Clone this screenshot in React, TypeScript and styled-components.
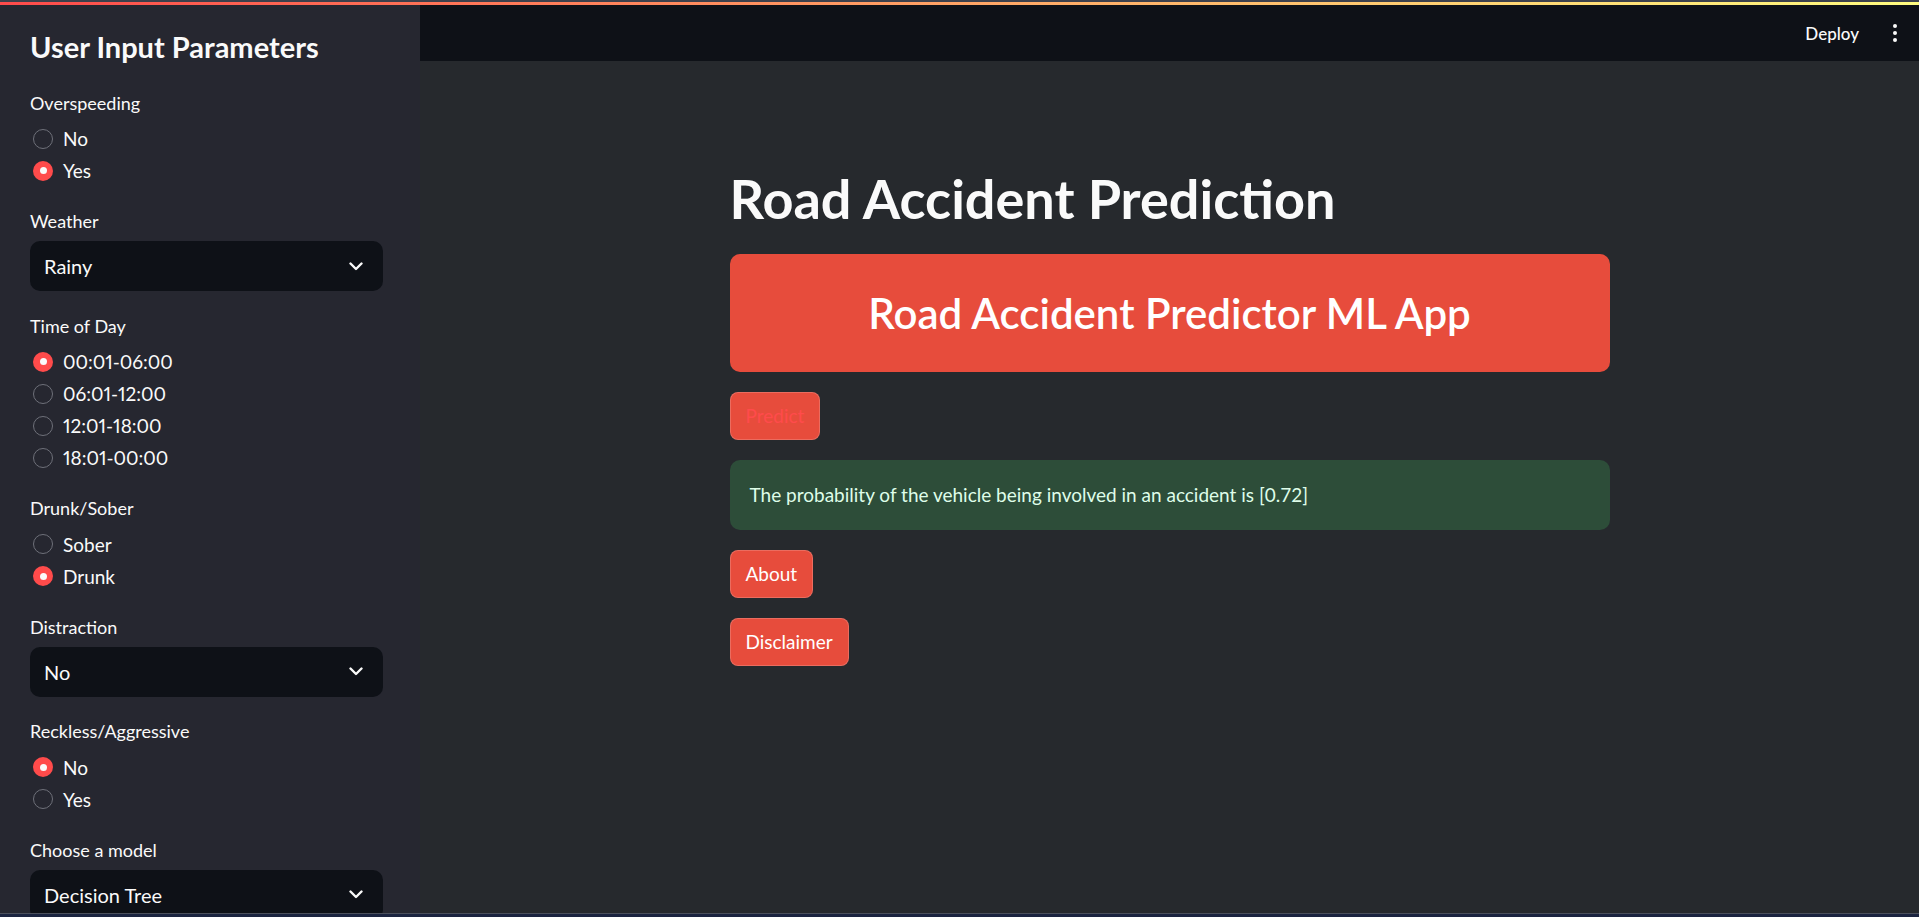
import React from "react";
import styled, { createGlobalStyle } from "styled-components";

const FONT = `Lato, "Noto Sans", "Liberation Sans", sans-serif`;

const GlobalStyle = createGlobalStyle`
  html, body {
    margin: 0;
    padding: 0;
    height: 100%;
    overflow: hidden;
    background: #26292d;
  }
  body {
    font-family: ${FONT};
    color: #fafafa;
    -webkit-font-smoothing: antialiased;
  }
  * { box-sizing: border-box; }
`;

const Page = styled.div`
  display: flex;
  flex-direction: column;
  height: 100vh;
  overflow: hidden;
`;

const ChromeStrip = styled.div`
  height: 2px;
  flex: none;
  background: #3d414c;
`;

const Decoration = styled.div`
  height: 3px;
  flex: none;
  background: linear-gradient(90deg, rgb(255, 75, 75), rgb(255, 253, 128));
`;

const Body = styled.div`
  flex: 1;
  display: flex;
  min-height: 0;
`;

const Sidebar = styled.aside`
  width: 420px;
  flex: none;
  background: #262730;
  padding: 22px 37px 0 30px;
  display: flex;
  flex-direction: column;
  overflow: hidden;
`;

const SidebarTitle = styled.h2`
  margin: 0 0 23.5px 0;
  font-size: 29px;
  line-height: 40px;
  font-weight: 700;
  color: #fafafa;
  white-space: nowrap;
`;

const Widgets = styled.div`
  display: flex;
  flex-direction: column;
  gap: 22.5px;
`;

const Widget = styled.div`
  display: flex;
  flex-direction: column;
  gap: 8px;
`;

const Label = styled.div`
  font-size: 18px;
  line-height: 24px;
  height: 24px;
  color: #fafafa;
`;

const RadioGroup = styled.div`
  display: flex;
  flex-direction: column;
`;

const RadioRow = styled.div`
  height: 32px;
  display: flex;
  align-items: center;
  gap: 10px;
  padding-left: 3px;
  font-size: 19px;
  font-variant-numeric: proportional-nums;
  color: #fafafa;
`;

const RadioDot = styled.span<{ $on?: boolean }>`
  width: 20px;
  height: 20px;
  border-radius: 50%;
  flex: none;
  display: flex;
  align-items: center;
  justify-content: center;
  background: ${(p) => (p.$on ? "#ff4b4b" : "transparent")};
  border: ${(p) => (p.$on ? "none" : "1.5px solid #6e7079")};
  &::after {
    content: "";
    display: ${(p) => (p.$on ? "block" : "none")};
    width: 7px;
    height: 7px;
    border-radius: 50%;
    background: #fafafa;
  }
`;

const SelectBox = styled.div`
  height: 50px;
  border-radius: 10px;
  background: #0e1117;
  display: flex;
  align-items: center;
  justify-content: space-between;
  padding: 0 20px 0 14px;
  font-size: 20px;
  color: #fafafa;
  flex: none;
`;

const Main = styled.div`
  flex: 1;
  display: flex;
  flex-direction: column;
  min-width: 0;
`;

const Header = styled.header`
  height: 56px;
  flex: none;
  background: #0e1117;
  display: flex;
  align-items: center;
  justify-content: flex-end;
  padding-right: 22px;
  gap: 34px;
`;

const DeployButton = styled.span`
  font-size: 17px;
  color: #fafafa;
  font-weight: 500;
`;

const MenuDots = styled.span`
  display: flex;
  flex-direction: column;
  gap: 3px;
  & > i {
    display: block;
    width: 4px;
    height: 4px;
    border-radius: 50%;
    background: #fafafa;
  }
`;

const Content = styled.div`
  width: 880px;
  margin: 0 auto;
  padding-top: 105px;
  display: flex;
  flex-direction: column;
  gap: 20px;
`;

const Title = styled.h1`
  margin: 0 0 2px 0;
  font-size: 54px;
  line-height: 66px;
  font-weight: 700;
  color: #fafafa;
  white-space: nowrap;
`;

const Banner = styled.div`
  height: 118px;
  border-radius: 10px;
  background: #e74c3c;
  display: flex;
  align-items: center;
  justify-content: center;
`;

const BannerText = styled.h2`
  margin: 0;
  font-size: 42px;
  font-weight: 600;
  color: #ffffff;
  white-space: nowrap;
`;

const Button = styled.button<{ $faded?: boolean }>`
  align-self: flex-start;
  height: 48px;
  padding: 0 15px;
  border-radius: 8px;
  border: 1px solid rgba(255, 255, 255, 0.18);
  background: #e74c3c;
  color: ${(p) => (p.$faded ? "#ff4b4b" : "#ffffff")};
  font-family: ${FONT};
  font-size: 19px;
  line-height: 32px;
  cursor: pointer;
`;

const SuccessBox = styled.div`
  height: 70px;
  border-radius: 10px;
  background: #2d4d39;
  color: #dffde9;
  font-size: 19px;
  line-height: 30px;
  padding: 20px;
`;

const BottomEdge = styled.div`
  position: fixed;
  left: 0;
  right: 0;
  bottom: 0;
  height: 4px;
  border-top: 1px solid #4b505c;
  background: #1b2440;
`;

const Chevron = () => (
  <svg width="14" height="9" viewBox="0 0 14 9" fill="none">
    <path d="M1.5 1.5 L7 7 L12.5 1.5" stroke="#fafafa" strokeWidth="2.4" strokeLinecap="round" strokeLinejoin="round" />
  </svg>
);

type RadioSpec = { label: string; options: string[]; selected: number };
type SelectSpec = { label: string; value: string };

const Radio = ({ label, options, selected }: RadioSpec) => (
  <Widget>
    <Label>{label}</Label>
    <RadioGroup>
      {options.map((o, i) => (
        <RadioRow key={o}>
          <RadioDot $on={i === selected} />
          {o}
        </RadioRow>
      ))}
    </RadioGroup>
  </Widget>
);

const Select = ({ label, value }: SelectSpec) => (
  <Widget>
    <Label>{label}</Label>
    <SelectBox>
      <span>{value}</span>
      <Chevron />
    </SelectBox>
  </Widget>
);

export default function App() {
  return (
    <>
      <GlobalStyle />
      <Page>
        <ChromeStrip />
        <Decoration />
        <Body>
          <Sidebar>
            <SidebarTitle>User Input Parameters</SidebarTitle>
            <Widgets>
              <Radio label="Overspeeding" options={["No", "Yes"]} selected={1} />
              <Select label="Weather" value="Rainy" />
              <Radio
                label="Time of Day"
                options={["00:01-06:00", "06:01-12:00", "12:01-18:00", "18:01-00:00"]}
                selected={0}
              />
              <Radio label="Drunk/Sober" options={["Sober", "Drunk"]} selected={1} />
              <Select label="Distraction" value="No" />
              <Radio label="Reckless/Aggressive" options={["No", "Yes"]} selected={0} />
              <Select label="Choose a model" value="Decision Tree" />
            </Widgets>
          </Sidebar>
          <Main>
            <Header>
              <DeployButton>Deploy</DeployButton>
              <MenuDots>
                <i />
                <i />
                <i />
              </MenuDots>
            </Header>
            <Content>
              <Title>Road Accident Prediction</Title>
              <Banner>
                <BannerText>Road Accident Predictor ML App</BannerText>
              </Banner>
              <Button $faded>Predict</Button>
              <SuccessBox>The probability of the vehicle being involved in an accident is [0.72]</SuccessBox>
              <Button>About</Button>
              <Button>Disclaimer</Button>
            </Content>
          </Main>
        </Body>
        <BottomEdge />
      </Page>
    </>
  );
}
